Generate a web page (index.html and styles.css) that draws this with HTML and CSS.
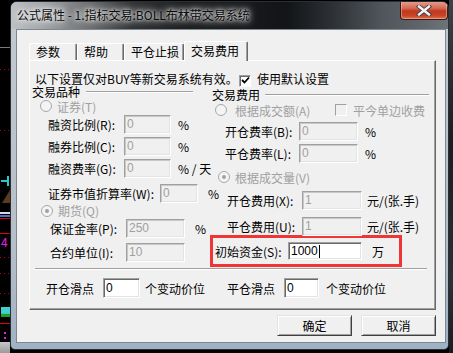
FILE: index.html
```html
<!DOCTYPE html>
<html lang="zh-CN">
<head>
  <meta charset="UTF-8">
  <title>公式属性</title>
  <link rel="stylesheet" href="styles.css">
</head>
<body>
  <!-- chart behind the dialog -->
  <div class="chart">
    <i class="mk grid-gray" style="top:47px"></i>
    <i class="mk dots" style="top:69px"></i>
    <i class="mk dots" style="top:130px"></i>
    <i class="mk cross-h" style="top:180px"></i>
    <i class="mk cross-v" style="top:176px"></i>
    <i class="mk tri" style="top:190px"></i>
    <i class="mk dbl" style="top:212px"></i>
    <i class="mk red" style="top:218px"></i>
    <i class="mk red" style="top:233px"></i>
    <span class="mk num" style="top:236px">4</span>
    <i class="mk dots" style="top:257px"></i>
    <i class="mk dots" style="top:273px"></i>
    <i class="mk dots" style="top:293px"></i>
    <i class="mk bar" style="top:307px"></i>
    <i class="mk red" style="top:323px"></i>
    <i class="mk pdot" style="top:332px"></i>
    <i class="mk pdot" style="top:337px"></i>
    <i class="mk floor" style="top:342px"></i>
  </div>

  <div class="window">
    <div class="titlebar">
      <div class="title">公式属性 - 1.指标交易:BOLL布林带交易系统</div>
      <div class="close">
        <svg width="16" height="11" viewBox="0 0 16 11">
          <path d="M3 1.5 L13 9.5 M13 1.5 L3 9.5" stroke="#3b3f4a" stroke-width="4.2" stroke-linecap="square"/>
          <path d="M3 1.5 L13 9.5 M13 1.5 L3 9.5" stroke="#f4f4f4" stroke-width="2.4" stroke-linecap="square"/>
        </svg>
      </div>
    </div>

    <div class="frame">
      <div class="client">
        <div class="tabs">
          <div class="tab" style="width:48px">参数</div>
          <div class="tab" style="width:47px">帮助</div>
          <div class="tab" style="width:60px">平仓止损</div>
          <div class="tab active" style="width:64px">交易费用</div>
        </div>

        <div class="panel">
          <div class="notice">
            <span class="notice-text">以下设置仅对BUY等新交易系统有效。</span>
            <span class="check on">
              <svg width="9" height="9" viewBox="0 0 9 9"><path d="M1 4 L3.5 6.5 L8 1.5" fill="none" stroke="#000" stroke-width="1.8"/></svg>
            </span>
            <span class="check-label">使用默认设置</span>
          </div>

          <div class="columns">
            <div class="col-left">
              <div class="group-head">
                <span>交易品种</span><i class="etch" style="width:107px"></i>
              </div>
              <div class="opt opt-sec">
                <span class="radio"></span><span class="dim">证券(T)</span>
              </div>
              <div class="field">
                <span class="lbl w76">融资比例(R):</span>
                <span class="edit off" style="width:47px">0</span>
                <span class="unit">%</span>
              </div>
              <div class="field">
                <span class="lbl w76">融券比例(C):</span>
                <span class="edit off" style="width:47px">0</span>
                <span class="unit">%</span>
              </div>
              <div class="field">
                <span class="lbl w76">融资费率(G):</span>
                <span class="edit off" style="width:47px">0</span>
                <span class="unit">% / 天</span>
              </div>
              <div class="field gap3">
                <span class="lbl w112">证券市值折算率(W):</span>
                <span class="edit off" style="width:38px">0</span>
                <span class="unit u10">%</span>
              </div>
              <div class="opt opt-fut">
                <span class="radio sel"></span><span class="dim">期货(Q)</span>
              </div>
              <div class="field">
                <span class="lbl w76 in2">保证金率(P):</span>
                <span class="edit off" style="width:59px">250</span>
                <span class="unit u10">%</span>
              </div>
              <div class="field gap2">
                <span class="lbl w76 in2">合约单位(I):</span>
                <span class="edit off" style="width:59px">10</span>
              </div>
            </div>

            <div class="col-right">
              <div class="group-head head-r">
                <span>交易费用</span><i class="etch" style="width:164px"></i>
              </div>
              <div class="opt opt-amt">
                <span class="radio"></span><span class="dim w100">根据成交额(A)</span>
                <span class="check"></span><span class="dim check-label">平今单边收费</span>
              </div>
              <div class="field gap2">
                <span class="lbl w74 in13">开仓费率(B):</span>
                <span class="edit off" style="width:59px">0</span>
                <span class="unit">%</span>
              </div>
              <div class="field">
                <span class="lbl w74 in13">平仓费率(L):</span>
                <span class="edit off" style="width:59px">0</span>
                <span class="unit">%</span>
              </div>
              <div class="opt opt-vol">
                <span class="radio sel"></span><span class="dim">根据成交量(V)</span>
              </div>
              <div class="field gap4">
                <span class="lbl w75 in15">开仓费用(X):</span>
                <span class="edit off" style="width:60px">1</span>
                <span class="unit u5">元/(张.手)</span>
              </div>
              <div class="field gap4">
                <span class="lbl w75 in15">平仓费用(U):</span>
                <span class="edit off" style="width:60px">1</span>
                <span class="unit u5">元/(张.手)</span>
              </div>
              <div class="mark">
                <span class="lbl w73">初始资金(S):</span>
                <span class="edit" style="width:74px;height:18px">1000<b class="caret"></b></span>
                <span class="unit u10">万</span>
              </div>
            </div>
          </div>

          <div class="sep"></div>

          <div class="slip">
            <span class="lbl slip-a">开仓滑点</span>
            <span class="edit" style="width:37px;height:20px">0</span>
            <span class="unit u5">个变动价位</span>
            <span class="lbl slip-b">平仓滑点</span>
            <span class="edit" style="width:35px;height:20px">0</span>
            <span class="unit">个变动价位</span>
          </div>
        </div>

        <div class="buttons">
          <div class="btn">确定</div>
          <div class="btn">取消</div>
        </div>
      </div>
    </div>
  </div>

  <div class="desk-right"></div>
</body>
</html>
```

FILE: styles.css
```css
* {
  box-sizing: border-box;
}
body {
  margin: 0;
  width: 453px;
  height: 353px;
  overflow: hidden;
  display: flex;
  background: #000;
  font-family: "Noto Sans CJK SC", "Noto Sans", sans-serif;
  font-size: 12px;
  color: #000;
}

/* chart strip on the left */
.chart {
  position: relative;
  width: 10px;
  height: 353px;
  flex: none;
}
.mk {
  position: absolute;
  left: 0;
  width: 10px;
  height: 1px;
}
.grid-gray { background: #7a7a7a; }
.dots { background: repeating-linear-gradient(to right, #b0001a 0 1px, transparent 1px 4px); }
.red { background: #e00010; }
.cross-h { background: #2ac8c8; width: 8px; height: 2px; left: 1px; }
.cross-v { background: #2ac8c8; width: 2px; height: 10px; left: 7px; }
.tri {
  width: 0;
  height: 0;
  left: 2px;
  border-left: 8px solid transparent;
  border-bottom: 13px solid #5a3a20;
}
.dbl { height: 5px; border-top: 2px solid #d8d8f0; border-bottom: 2px solid #5070c0; }
.num { height: auto; left: 1px; color: #e020e0; font-size: 12px; line-height: 12px; }
.bar { height: 10px; left: 1px; width: 9px; background: #40c8c8; border-top: 6px solid #40d0d0; box-shadow: inset 0 -3px #20a020; }
.pdot { width: 2px; height: 2px; left: 4px; background: #e020e0; }
.floor { height: 11px; background: linear-gradient(#c8c8c8, #9a9a9a); }

.desk-right {
  flex: 1;
  background: linear-gradient(#3c4248, #1a1d22 40%, #2a3038 80%, #1a1c20);
}

/* window */
.window {
  flex: none;
  width: 439px;
  height: 349px;
  margin-top: 1px;
  display: flex;
  flex-direction: column;
  border: 1px solid #2b2f35;
  border-radius: 7px 7px 5px 5px;
  overflow: hidden;
  background: linear-gradient(#c3c9cf, #b5bfc9 70%, #9fb2c4);
}
.titlebar {
  height: 27px;
  display: flex;
  align-items: flex-start;
  background: linear-gradient(to right, #bec1c4 0, #a5a8ab 30px, #6a6c6e 80px, #323436 120px, #1d1f21 170px, #18191b 240px, #121417 275px, #2c3034 320px, #50555b 370px, #5f656b 410px, #6d7379 100%);
}
.title {
  padding: 5px 0 0 6px;
  line-height: 16px;
  white-space: nowrap;
  color: #0a0a0a;
  text-shadow: 0 0 6px #fff, 0 0 10px rgba(255, 255, 255, 0.85), 0 0 3px rgba(255, 255, 255, 0.7);
}
.close {
  margin-left: auto;
  margin-top: -1px;
  width: 48px;
  height: 19px;
  display: flex;
  align-items: center;
  justify-content: center;
  border: 1px solid #3a1a14;
  border-top: none;
  border-radius: 0 0 4px 4px;
  background: linear-gradient(#e5a394 0, #d56a52 40%, #c2381d 55%, #c84426 80%, #d8704c);
  box-shadow: inset 0 0 0 1px rgba(255, 210, 200, 0.45);
}

.frame {
  flex: 1;
  padding: 0 2px 6px 5px;
}
.client {
  height: 314px;
  padding: 11px 9px 0 12px;
  background: #f0f0f0;
  border: 1px solid #7d8893;
}

/* tabs */
.tabs {
  display: flex;
  align-items: flex-end;
  height: 19px;
}
.tab {
  height: 17px;
  padding-left: 6px;
  line-height: 16px;
  border-top: 1px solid #fff;
  border-left: 1px solid #fff;
  border-right: 1px solid #696969;
  border-radius: 2px 2px 0 0;
  box-shadow: inset -1px 0 #a0a0a0;
  white-space: nowrap;
}
.tab.active {
  position: relative;
  z-index: 1;
  height: 20px;
  margin-bottom: -1px;
  line-height: 17px;
  background: #f0f0f0;
}

.panel {
  height: 250px;
  padding: 12px 0 0 2px;
  border-top: 1px solid #fff;
  border-left: 1px solid #fff;
  border-right: 1px solid #696969;
  border-bottom: 1px solid #696969;
  box-shadow: inset -1px -1px #a0a0a0;
}

.notice {
  display: flex;
  align-items: center;
  height: 12px;
  line-height: 12px;
  margin-left: 3px;
  white-space: nowrap;
}
.notice-text {
  width: 204px;
}
.check {
  width: 12px;
  height: 12px;
  flex: none;
  display: flex;
  align-items: center;
  justify-content: center;
  background: #f0f0f0;
  border-top: 1px solid #a0a0a0;
  border-left: 1px solid #a0a0a0;
  border-right: 1px solid #fff;
  border-bottom: 1px solid #fff;
}
.check.on {
  margin-top: 3px;
  background: #fff;
  box-shadow: inset 1px 1px #696969;
}
.check-label {
  margin-left: 6px;
}

.columns {
  display: flex;
  align-items: flex-start;
  margin-top: 1px;
}
.col-left {
  width: 178px;
  flex: none;
}
.col-right {
  flex: 1;
  padding-left: 2px;
}

.group-head {
  display: flex;
  align-items: center;
  height: 12px;
  line-height: 12px;
  white-space: nowrap;
}
.head-r {
  margin-top: 3px;
}
.etch {
  height: 2px;
  margin-left: 6px;
  border-top: 1px solid #a0a0a0;
  border-bottom: 1px solid #fff;
}
.head-r .etch {
  margin-left: 5px;
}

.opt {
  display: flex;
  align-items: center;
  white-space: nowrap;
}
.opt-sec { height: 14px; margin-top: 1px; padding-left: 8px; }
.opt-fut { height: 13px; padding-left: 9px; }
.opt-amt { height: 16px; margin-top: 1px; padding-left: 3px; }
.opt-vol { height: 16px; margin-top: 5px; padding-left: 6px; }
.radio {
  position: relative;
  width: 12px;
  height: 12px;
  flex: none;
  margin-right: 5px;
  border-radius: 50%;
  border: 1px solid #a8a8a8;
  background: #f4f4f4;
}
.opt-amt .radio { margin-right: 8px; }
.radio.sel::after {
  content: "";
  position: absolute;
  left: 3px;
  top: 3px;
  width: 4px;
  height: 4px;
  border-radius: 50%;
  background: #a0a0a0;
}
.dim {
  color: #a0a0a0;
}
.w100 { width: 100px; }

.field {
  display: flex;
  align-items: center;
  height: 22px;
  white-space: nowrap;
}
.gap2 { margin-top: 2px; }
.gap3 { margin-top: 3px; }
.gap4 { margin-top: 4px; }
.lbl {
  flex: none;
  margin-left: 16px;
}
.in2 { margin-left: 18px; }
.in13 { margin-left: 13px; }
.in15 { margin-left: 15px; }
.w73 { width: 73px; }
.w74 { width: 74px; }
.w75 { width: 75px; }
.w76 { width: 76px; }
.w112 { width: 112px; }

.edit {
  flex: none;
  display: flex;
  align-items: center;
  height: 19px;
  padding-left: 2px;
  background: #fff;
  border-top: 1px solid #a0a0a0;
  border-left: 1px solid #a0a0a0;
  border-right: 1px solid #fff;
  border-bottom: 1px solid #fff;
  box-shadow: inset 1px 1px #696969, inset -1px -1px #e3e3e3;
  font-family: "Liberation Sans", sans-serif;
  font-size: 12px;
}
.edit.off {
  background: #f0f0f0;
  color: #a0a0a0;
  box-shadow: inset 1px 1px #c8c8c8, inset -1px -1px #e3e3e3;
}
.caret {
  width: 1px;
  height: 13px;
  margin-left: 1px;
  background: #000;
}
.unit {
  margin-left: 7px;
}
.u5 { margin-left: 5px; }
.u10 { margin-left: 10px; }

/* red highlight box drawn over the screenshot */
.mark {
  display: flex;
  align-items: center;
  width: 192px;
  height: 32px;
  margin: -2px 0 0 -2px;
  border: 3px solid #f03535;
}
.mark .lbl {
  margin-left: 2px;
}

.sep {
  width: 392px;
  height: 2px;
  margin: 1px 0 0 3px;
  border-top: 1px solid #a0a0a0;
  border-bottom: 1px solid #fff;
}

.slip {
  display: flex;
  align-items: center;
  height: 20px;
  margin-top: 8px;
  white-space: nowrap;
}
.slip-a { margin-left: 14px; width: 57px; }
.slip-b { margin-left: 22px; width: 57px; }

.buttons {
  display: flex;
  justify-content: flex-end;
  gap: 9px;
  margin-top: 5px;
}
.btn {
  width: 75px;
  height: 21px;
  display: flex;
  align-items: center;
  justify-content: center;
  background: #f0f0f0;
  border-top: 1px solid #e3e3e3;
  border-left: 1px solid #e3e3e3;
  border-right: 1px solid #404040;
  border-bottom: 1px solid #404040;
  box-shadow: inset 1px 1px #fff, inset -1px -1px #a0a0a0;
}
```
